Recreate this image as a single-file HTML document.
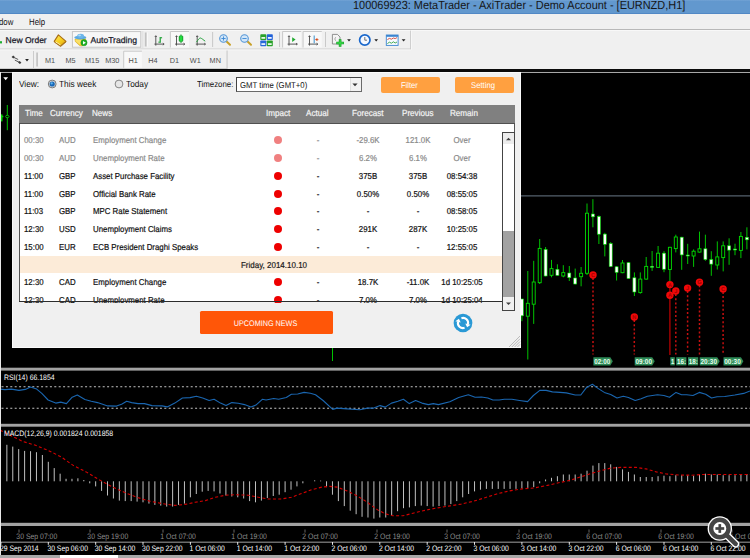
<!DOCTYPE html>
<html><head><meta charset="utf-8"><title>MetaTrader - News Calendar</title>
<style>
html,body{margin:0;padding:0}
body{text-rendering:geometricPrecision;width:750px;height:558px;overflow:hidden;position:relative;background:#000;font-family:"Liberation Sans",sans-serif;color:#000}
.abs{position:absolute}
.t{position:absolute;white-space:pre;line-height:12px;height:12px;transform-origin:0 50%}
.sx{display:inline-block;transform-origin:50% 50%}
#title{left:0;top:0;width:750px;height:14px;background:linear-gradient(#76a5d6 0,#6298ce 1.2px,#6298ce 12.6px,#4f86c4 13.6px,#4f86c4 14px)}
#title .t{left:353.4px;top:-0.6px;font-size:11.8px;transform:scaleX(0.927);color:#161616}
#menu{left:0;top:14px;width:750px;height:16px;background:#f0f0f0}
#tb{left:0;top:30px;width:750px;height:40px;background:#f0f0f0}
#panel{left:12px;top:72px;width:509px;height:276px;background:#f0f0f0;box-sizing:border-box;border:1px solid #fbfbfb}
.btn{position:absolute;border-radius:2px;color:#fff;text-align:center;white-space:pre}
#hdr{left:19px;top:104.8px;width:496px;height:17.9px;background:#808080;border-bottom:1px solid #505050;box-sizing:content-box}
#hdr span{position:absolute;top:2.4px;font-size:8.8px;transform:scaleX(0.92);transform-origin:0 50%;-webkit-text-stroke:0.2px #f4f4f4;line-height:12px;color:#f4f4f4;white-space:pre}
#list{left:20px;top:123.7px;width:493.5px;height:179.5px;background:linear-gradient(#fff 0,#fff 177.8px,#f0f0f0 177.8px);overflow:hidden}
.row{position:absolute;left:0;width:484px;height:12px;font-size:8.6px;line-height:12px;color:#111;-webkit-text-stroke:0.2px currentColor}
.row.past{color:#8a8a8a}
.row span{position:absolute;top:0;white-space:pre;transform:scaleX(0.913);transform-origin:0 50%}
.row span.c{width:60px;text-align:center;transform-origin:50% 50%}
.row i{position:absolute;top:1.9px;width:8.2px;height:8.2px;border-radius:50%;background:#ee0000}
.row.past i{background:#f08080}
</style></head><body>
<div id="title" class="abs"><div class="t">100069923: MetaTrader - AxiTrader - Demo Account - [EURNZD,H1]</div></div>
<div id="menu" class="abs"><div class="t" style="left:-0.6px;top:1.5px;font-size:9.2px;transform:scaleX(0.85);color:#111">dow</div><div class="t" style="left:29px;top:1.5px;font-size:9.2px;transform:scaleX(0.85);color:#111">Help</div></div>
<div id="tb" class="abs">
<svg class="abs" style="left:0;top:-30px" width="750" height="72" viewBox="0 0 750 72">
<defs>
<linearGradient id="gy" x1="0" y1="0" x2="1" y2="1"><stop offset="0" stop-color="#ffe860"/><stop offset="0.5" stop-color="#f8d020"/><stop offset="1" stop-color="#dca010"/></linearGradient>
<linearGradient id="gg" x1="0" y1="0" x2="1" y2="0"><stop offset="0" stop-color="#00a818"/><stop offset="0.5" stop-color="#30f050"/><stop offset="1" stop-color="#00a818"/></linearGradient>
<linearGradient id="gb" x1="0" y1="0" x2="0" y2="1"><stop offset="0" stop-color="#7cc0f0"/><stop offset="1" stop-color="#2a80d0"/></linearGradient>
</defs>
<!-- toolbar frame lines -->
<rect x="0" y="29" width="750" height="1" fill="#b8b8b8"/><rect x="0" y="30" width="750" height="0.8" fill="#fafafa"/>
<rect x="0" y="48.6" width="411" height="0.9" fill="#c6c6c6"/>
<rect x="0" y="49.5" width="411" height="0.8" fill="#fcfcfc"/>
<rect x="410.2" y="30.6" width="0.9" height="18.6" fill="#c8c8c8"/><rect x="411.1" y="30.6" width="0.8" height="19" fill="#fafafa"/>
<rect x="0" y="68" width="227.5" height="0.8" fill="#c6c6c6"/>
<rect x="226.6" y="50.5" width="0.9" height="18" fill="#c0c0c0"/>
<rect x="33" y="51" width="0.9" height="17" fill="#c8c8c8"/>
<rect x="142.4" y="31" width="0.9" height="17" fill="#dcdcdc"/>
<!-- green partial icon -->
<rect x="0" y="41.2" width="2" height="2.2" fill="#20b030"/>
<!-- book icon -->
<polygon points="58.4,34.9 66,41.3 60.6,45.9 54.2,41.4" fill="url(#gy)" stroke="#a86c10" stroke-width="1.1" stroke-linejoin="round"/>
<path d="M55.4,41.9 L60.5,44.9" stroke="#fff2b0" stroke-width="1" fill="none"/>
<path d="M54.3,42 L60.6,46.5 L66,41.9" stroke="#a87014" stroke-width="0.9" fill="none"/>
<!-- AutoTrading button -->
<rect x="72.4" y="31.6" width="68.4" height="15.6" fill="#f7f7f7" stroke="#c2c2c2" stroke-width="0.9"/>
<polygon points="75,39 85.8,38.8 84.4,44.6 82,46 79.6,45.6 75.2,41.4" fill="#f2cc30" stroke="#c89a18" stroke-width="0.5"/>
<polygon points="75.4,39.4 82,39.4 79.8,44.6 75.6,41.2" fill="#fae068"/>
<ellipse cx="80.3" cy="37.5" rx="6" ry="1.9" fill="#5aa8e0"/>
<ellipse cx="80.6" cy="35.9" rx="3.4" ry="2.1" fill="#6cb6ea"/>
<ellipse cx="79.6" cy="35.4" rx="1.4" ry="0.8" fill="#b4dcf6"/>
<circle cx="84" cy="42.7" r="3.1" fill="#1cae24" stroke="#0c8c16" stroke-width="0.4"/>
<polygon points="83,41 83,44.4 85.9,42.7" fill="#fff"/>
<!-- grip 1 -->
<rect x="144.8" y="32.5" width="2" height="14" fill="#c2c2c2"/><rect x="146.8" y="32.5" width="0.8" height="14" fill="#fff"/>
<!-- icon1: bar chart -->
<path d="M155.8,36 V45.6 M154.4,44.1 H164.0" stroke="#484848" stroke-width="0.9" fill="none"/><path d="M154.8,37 L155.8,35.6 L156.8,37 M162.8,43.1 L164.20000000000002,44.1 L162.8,45.1" stroke="#3c3c3c" stroke-width="0.7" fill="none"/>
<rect x="159.6" y="37" width="1.2" height="5.8" fill="#18a030"/><rect x="158.4" y="41.6" width="1.4" height="1.1" fill="#18a030"/><rect x="160.6" y="37.2" width="1.5" height="1.1" fill="#18a030"/>
<!-- pressed box candle -->
<rect x="170.4" y="31.5" width="18.6" height="16" fill="#f8f8f8"/><path d="M170.4,47.5 V31.5 H189" stroke="#c4c4c4" stroke-width="0.9" fill="none"/>
<path d="M176.5,36 V45.6 M175.1,44.1 H184.7" stroke="#484848" stroke-width="0.9" fill="none"/><path d="M175.5,37 L176.5,35.6 L177.5,37 M183.5,43.1 L184.9,44.1 L183.5,45.1" stroke="#3c3c3c" stroke-width="0.7" fill="none"/>
<path d="M181,34.4 V43" stroke="#10a028" stroke-width="0.9"/>
<rect x="179.1" y="35.8" width="3.8" height="5.8" rx="1" fill="url(#gg)" stroke="#0a9020" stroke-width="0.5"/>
<!-- icon3: line chart -->
<path d="M197.2,36 V45.6 M195.79999999999998,44.1 H205.39999999999998" stroke="#484848" stroke-width="0.9" fill="none"/><path d="M196.2,37 L197.2,35.6 L198.2,37 M204.2,43.1 L205.6,44.1 L204.2,45.1" stroke="#3c3c3c" stroke-width="0.7" fill="none"/>
<path d="M196.4,42.2 C198,40 199,38.2 200.4,38 C202,38.4 203.4,40 205.2,41.2" stroke="#20a038" stroke-width="1" fill="none"/>
<rect x="212.2" y="32" width="0.9" height="15" fill="#c4c4c4"/>
<!-- zoom in/out -->
<g>
<line x1="226.6" y1="41.6" x2="230" y2="44.8" stroke="#c8a028" stroke-width="2" stroke-linecap="round"/>
<circle cx="223.5" cy="38.5" r="3.8" fill="#d2e6f8" stroke="#5596d6" stroke-width="1.1"/>
<path d="M221.4,38.5 H225.6 M223.5,36.4 V40.6" stroke="#3b88d4" stroke-width="0.9"/>
<line x1="247.6" y1="41.6" x2="251" y2="44.8" stroke="#c8a028" stroke-width="2" stroke-linecap="round"/>
<circle cx="244.5" cy="38.5" r="3.8" fill="#d2e6f8" stroke="#5596d6" stroke-width="1.1"/>
<path d="M242.4,38.5 H246.6" stroke="#3b88d4" stroke-width="0.9"/>
</g>
<!-- grid icon -->
<rect x="260.3" y="34.3" width="6" height="5.8" rx="0.8" fill="#28a028"/><rect x="266.8" y="34.3" width="6" height="5.8" rx="0.8" fill="#2060d8"/>
<rect x="260.3" y="40.5" width="6" height="5.8" rx="0.8" fill="#2868d8"/><rect x="266.8" y="40.5" width="6" height="5.8" rx="0.8" fill="#28a028"/>
<rect x="261.4" y="37" width="3.8" height="1.8" fill="#e8f8e8"/><rect x="267.9" y="37" width="3.8" height="1.8" fill="#e8f0ff"/>
<rect x="261.4" y="43.2" width="3.8" height="1.8" fill="#e8f0ff"/><rect x="267.9" y="43.2" width="3.8" height="1.8" fill="#e8f8e8"/>
<rect x="279" y="32" width="0.9" height="15" fill="#c4c4c4"/>
<!-- pressed chart shift -->
<rect x="282.6" y="31.5" width="18.6" height="16" fill="#f8f8f8"/><path d="M282.6,47.5 V31.5 H301.2" stroke="#c4c4c4" stroke-width="0.9" fill="none"/>
<path d="M289,36 V45.6 M287.6,44.1 H297.20000000000005" stroke="#484848" stroke-width="0.9" fill="none"/><path d="M288,37 L289,35.6 L290,37 M296.0,43.1 L297.40000000000003,44.1 L296.0,45.1" stroke="#3c3c3c" stroke-width="0.7" fill="none"/>
<polygon points="292.2,37.2 292.2,42 295.6,39.6" fill="#22aa30"/>
<rect x="303.1" y="31.5" width="18.7" height="16" fill="#f8f8f8"/><path d="M303.1,47.5 V31.5 H321.8" stroke="#c4c4c4" stroke-width="0.9" fill="none"/>
<path d="M309.5,36 V45.6 M308.1,44.1 H317.70000000000005" stroke="#484848" stroke-width="0.9" fill="none"/><path d="M308.5,37 L309.5,35.6 L310.5,37 M316.5,43.1 L317.90000000000003,44.1 L316.5,45.1" stroke="#3c3c3c" stroke-width="0.7" fill="none"/>
<path d="M314.2,35.4 V43.2" stroke="#4a98d0" stroke-width="1.1"/>
<polygon points="315,39.6 317.4,38 317.4,41.2" fill="#d84818"/><path d="M317,39.6 H318.4" stroke="#d84818" stroke-width="0.9"/>
<rect x="325" y="32" width="0.9" height="15" fill="#c4c4c4"/>
<!-- doc plus -->
<path d="M332.4,34.4 H337.4 L340,37 V44 H332.4 Z" fill="#f4f4f4" stroke="#787878" stroke-width="0.8"/>
<path d="M335.8,37.2 C334.6,38 334.6,40 335.8,40.8" stroke="#888" stroke-width="0.7" fill="none"/>
<path d="M340.1,39.2 V46.8 M336.3,43 H343.9" stroke="#0e9a1e" stroke-width="2.6"/>
<path d="M340.1,39.8 V46.2 M336.9,43 H343.3" stroke="#38d848" stroke-width="1.3"/>
<polygon points="347.1,39.199999999999996 350.9,39.199999999999996 349,41.6" fill="#222"/>
<!-- clock -->
<circle cx="364.8" cy="40" r="5.2" fill="#f4f8ff" stroke="#1a68cc" stroke-width="1.7"/>
<path d="M364.8,37 V40.2 H367" stroke="#505050" stroke-width="0.8" fill="none"/>
<polygon points="374.3,39.199999999999996 378.09999999999997,39.199999999999996 376.2,41.6" fill="#222"/>
<!-- template -->
<rect x="386.3" y="35" width="11.8" height="10.4" fill="#f6faff" stroke="#3a84d0" stroke-width="0.9"/>
<rect x="386.3" y="35" width="11.8" height="1.8" fill="#3a84d0"/>
<path d="M387.4,39.6 L389.4,38.4 L391.4,39.2 L393.4,38 L395.2,38.6 L397,37.6" stroke="#d04030" stroke-width="0.9" fill="none"/>
<path d="M387.4,43.6 L389.4,42.2 L391.4,43.2 L393.4,41.8 L395.2,43 L397,42" stroke="#30a040" stroke-width="0.9" fill="none"/>
<polygon points="401.70000000000005,39.199999999999996 405.5,39.199999999999996 403.6,41.6" fill="#222"/>
<!-- toolbar2 -->
<path d="M13,57 L18.2,59.5 M14.8,60.1 L20,62.6" stroke="#444" stroke-width="0.9" fill="none"/>
<polygon points="11.6,56.9 13.2,55.5 14.9,57.1 13.3,58.6" fill="#3a3a3a"/><polygon points="21.4,62.7 19.8,64.1 18.1,62.5 19.7,61" fill="#3a3a3a"/>
<polygon points="25.1,59.0 28.9,59.0 27,61.400000000000006" fill="#222"/>
<rect x="36.2" y="52.5" width="2.2" height="14" fill="#c6c6c6"/><rect x="38.4" y="52.5" width="0.8" height="14" fill="#fff"/>
<rect x="123.7" y="51.2" width="18.2" height="16.6" fill="#f8f8f8"/><path d="M123.7,67.8 V51.2 H141.9" stroke="#c4c4c4" stroke-width="0.9" fill="none"/>
</svg>
<div class="t" style="left:5.6px;top:4px;font-size:8.5px;color:#1c1c2c;-webkit-text-stroke:0.25px #1c1c2c;">New Order</div>
<div class="t" style="left:90.5px;top:4px;font-size:8.6px;color:#1c1c2c;-webkit-text-stroke:0.25px #1c1c2c;">AutoTrading</div>
<div class="t" style="left:45px;top:25.3px;font-size:7.3px;color:#505050">M1</div>
<div class="t" style="left:65.4px;top:25.3px;font-size:7.3px;color:#505050">M5</div>
<div class="t" style="left:85px;top:25.3px;font-size:7.3px;color:#505050">M15</div>
<div class="t" style="left:105.2px;top:25.3px;font-size:7.3px;color:#505050">M30</div>
<div class="t" style="left:128.6px;top:25.3px;font-size:7.3px;color:#505050">H1</div>
<div class="t" style="left:148.3px;top:25.3px;font-size:7.3px;color:#505050">H4</div>
<div class="t" style="left:169.8px;top:25.3px;font-size:7.3px;color:#505050">D1</div>
<div class="t" style="left:189.8px;top:25.3px;font-size:7.3px;color:#505050">W1</div>
<div class="t" style="left:209.6px;top:25.3px;font-size:7.3px;color:#505050">MN</div>
</div>
<div class="abs" style="left:0;top:69.2px;width:750px;height:2.8px;background:#0a0a0a"></div>
<div class="abs" style="left:0;top:72px;width:750px;height:1px;background:#a8a8a8"></div>
<svg class="abs" style="left:0;top:0" width="750" height="558" viewBox="0 0 750 558" font-family="Liberation Sans, sans-serif">
<rect x="521" y="195.1" width="229" height="1.5" fill="#46505a"/>
<line x1="521.9" y1="298.8" x2="521.9" y2="321.2" stroke="#00c400" stroke-width="1"/>
<rect x="520.4" y="299.0" width="3" height="16.8" fill="#ffffff" stroke="#00e000" stroke-width="0.6"/>
<line x1="527.8" y1="271.0" x2="527.8" y2="359.5" stroke="#00c400" stroke-width="1"/>
<rect x="526.3" y="303.3" width="3" height="12.9" fill="#000" stroke="#00dc00" stroke-width="0.9"/>
<line x1="533.7" y1="260.8" x2="533.7" y2="323.9" stroke="#00c400" stroke-width="1"/>
<rect x="532.2" y="282.0" width="3" height="22.2" fill="#000" stroke="#00dc00" stroke-width="0.9"/>
<line x1="539.7" y1="239.0" x2="539.7" y2="284.0" stroke="#00c400" stroke-width="1"/>
<rect x="538.2" y="248.4" width="3" height="34.3" fill="#000" stroke="#00dc00" stroke-width="0.9"/>
<line x1="545.6" y1="247.0" x2="545.6" y2="276.5" stroke="#00c400" stroke-width="1"/>
<rect x="544.1" y="249.5" width="3" height="26.5" fill="#ffffff" stroke="#00e000" stroke-width="0.6"/>
<line x1="551.5" y1="259.9" x2="551.5" y2="277.3" stroke="#00c400" stroke-width="1"/>
<rect x="550.0" y="268.6" width="3" height="6.7" fill="#000" stroke="#00dc00" stroke-width="0.9"/>
<line x1="557.4" y1="264.3" x2="557.4" y2="275.8" stroke="#00c400" stroke-width="1"/>
<rect x="555.9" y="269.3" width="3" height="6.0" fill="#ffffff" stroke="#00e000" stroke-width="0.6"/>
<line x1="563.3" y1="265.2" x2="563.3" y2="277.3" stroke="#00c400" stroke-width="1"/>
<rect x="561.8" y="272.6" width="3" height="3.4" fill="#000" stroke="#00dc00" stroke-width="0.9"/>
<line x1="569.3" y1="266.0" x2="569.3" y2="281.0" stroke="#00c400" stroke-width="1"/>
<rect x="567.8" y="273.0" width="3" height="4.7" fill="#ffffff" stroke="#00e000" stroke-width="0.6"/>
<line x1="575.2" y1="268.6" x2="575.2" y2="284.5" stroke="#00c400" stroke-width="1"/>
<rect x="573.7" y="278.0" width="3" height="6.0" fill="#ffffff" stroke="#00e000" stroke-width="0.6"/>
<line x1="581.1" y1="267.0" x2="581.1" y2="286.3" stroke="#00c400" stroke-width="1"/>
<rect x="579.6" y="273.3" width="3" height="3.4" fill="#000" stroke="#00dc00" stroke-width="0.9"/>
<line x1="587.0" y1="203.5" x2="587.0" y2="275.0" stroke="#00c400" stroke-width="1"/>
<rect x="585.5" y="213.2" width="3" height="60.1" fill="#000" stroke="#00dc00" stroke-width="0.9"/>
<line x1="592.9" y1="199.2" x2="592.9" y2="227.3" stroke="#00c400" stroke-width="1"/>
<rect x="591.4" y="214.0" width="3" height="2.8" fill="#ffffff" stroke="#00e000" stroke-width="0.6"/>
<line x1="598.9" y1="215.5" x2="598.9" y2="244.0" stroke="#00c400" stroke-width="1"/>
<rect x="597.4" y="216.5" width="3" height="17.7" fill="#ffffff" stroke="#00e000" stroke-width="0.6"/>
<line x1="604.8" y1="232.8" x2="604.8" y2="256.4" stroke="#00c400" stroke-width="1"/>
<rect x="603.3" y="234.1" width="3" height="10.2" fill="#ffffff" stroke="#00e000" stroke-width="0.6"/>
<line x1="610.7" y1="242.2" x2="610.7" y2="267.0" stroke="#00c400" stroke-width="1"/>
<rect x="609.2" y="243.6" width="3" height="22.9" fill="#ffffff" stroke="#00e000" stroke-width="0.6"/>
<line x1="616.6" y1="266.0" x2="616.6" y2="280.5" stroke="#00c400" stroke-width="1"/>
<rect x="615.1" y="266.8" width="3" height="5.6" fill="#ffffff" stroke="#00e000" stroke-width="0.6"/>
<line x1="622.5" y1="260.0" x2="622.5" y2="273.2" stroke="#00c400" stroke-width="1"/>
<rect x="621.0" y="263.0" width="3" height="9.7" fill="#000" stroke="#00dc00" stroke-width="0.9"/>
<line x1="628.5" y1="262.0" x2="628.5" y2="279.0" stroke="#00c400" stroke-width="1"/>
<rect x="627.0" y="262.7" width="3" height="15.8" fill="#ffffff" stroke="#00e000" stroke-width="0.6"/>
<line x1="634.4" y1="272.4" x2="634.4" y2="296.0" stroke="#00c400" stroke-width="1"/>
<rect x="632.9" y="277.8" width="3" height="14.2" fill="#ffffff" stroke="#00e000" stroke-width="0.6"/>
<line x1="640.3" y1="272.4" x2="640.3" y2="293.7" stroke="#00c400" stroke-width="1"/>
<rect x="638.8" y="279.1" width="3" height="13.5" fill="#000" stroke="#00dc00" stroke-width="0.9"/>
<line x1="646.2" y1="257.0" x2="646.2" y2="279.6" stroke="#00c400" stroke-width="1"/>
<rect x="644.7" y="266.4" width="3" height="12.7" fill="#000" stroke="#00dc00" stroke-width="0.9"/>
<line x1="652.1" y1="251.0" x2="652.1" y2="270.9" stroke="#00c400" stroke-width="1"/>
<rect x="650.6" y="266.3" width="3" height="1.0" fill="#ffffff" stroke="#00e000" stroke-width="0.6"/>
<line x1="658.1" y1="246.0" x2="658.1" y2="267.8" stroke="#00c400" stroke-width="1"/>
<rect x="656.6" y="253.2" width="3" height="14.2" fill="#000" stroke="#00dc00" stroke-width="0.9"/>
<line x1="664.0" y1="251.2" x2="664.0" y2="272.2" stroke="#00c400" stroke-width="1"/>
<rect x="662.5" y="253.2" width="3" height="16.0" fill="#ffffff" stroke="#00e000" stroke-width="0.6"/>
<line x1="669.9" y1="246.8" x2="669.9" y2="281.2" stroke="#00c400" stroke-width="1"/>
<rect x="668.4" y="247.3" width="3" height="22.2" fill="#000" stroke="#00dc00" stroke-width="0.9"/>
<line x1="675.8" y1="234.7" x2="675.8" y2="252.4" stroke="#00c400" stroke-width="1"/>
<rect x="674.3" y="237.0" width="3" height="11.6" fill="#000" stroke="#00dc00" stroke-width="0.9"/>
<line x1="681.7" y1="236.8" x2="681.7" y2="269.8" stroke="#00c400" stroke-width="1"/>
<rect x="680.2" y="237.2" width="3" height="17.7" fill="#ffffff" stroke="#00e000" stroke-width="0.6"/>
<line x1="687.7" y1="243.8" x2="687.7" y2="264.0" stroke="#00c400" stroke-width="1"/>
<rect x="686.2" y="255.0" width="3" height="1.0" fill="#ffffff" stroke="#00e000" stroke-width="0.6"/>
<line x1="693.6" y1="249.4" x2="693.6" y2="266.9" stroke="#00c400" stroke-width="1"/>
<rect x="692.1" y="251.2" width="3" height="4.8" fill="#000" stroke="#00dc00" stroke-width="0.9"/>
<line x1="699.5" y1="231.6" x2="699.5" y2="252.5" stroke="#00c400" stroke-width="1"/>
<rect x="698.0" y="248.8" width="3" height="3.3" fill="#000" stroke="#00dc00" stroke-width="0.9"/>
<line x1="705.4" y1="234.7" x2="705.4" y2="260.8" stroke="#00c400" stroke-width="1"/>
<rect x="703.9" y="248.8" width="3" height="10.7" fill="#ffffff" stroke="#00e000" stroke-width="0.6"/>
<line x1="711.3" y1="251.2" x2="711.3" y2="275.8" stroke="#00c400" stroke-width="1"/>
<rect x="709.8" y="259.6" width="3" height="4.5" fill="#ffffff" stroke="#00e000" stroke-width="0.6"/>
<line x1="717.3" y1="241.4" x2="717.3" y2="269.5" stroke="#00c400" stroke-width="1"/>
<rect x="715.8" y="256.9" width="3" height="8.1" fill="#000" stroke="#00dc00" stroke-width="0.9"/>
<line x1="723.2" y1="241.4" x2="723.2" y2="271.4" stroke="#00c400" stroke-width="1"/>
<rect x="721.7" y="245.8" width="3" height="11.8" fill="#000" stroke="#00dc00" stroke-width="0.9"/>
<line x1="729.1" y1="238.3" x2="729.1" y2="264.8" stroke="#00c400" stroke-width="1"/>
<rect x="727.6" y="245.8" width="3" height="4.3" fill="#ffffff" stroke="#00e000" stroke-width="0.6"/>
<line x1="735.0" y1="243.7" x2="735.0" y2="255.2" stroke="#00c400" stroke-width="1"/>
<rect x="733.5" y="249.0" width="3" height="1.0" fill="#ffffff" stroke="#00e000" stroke-width="0.6"/>
<line x1="740.9" y1="232.0" x2="740.9" y2="258.1" stroke="#00c400" stroke-width="1"/>
<rect x="739.4" y="236.4" width="3" height="14.0" fill="#000" stroke="#00dc00" stroke-width="0.9"/>
<line x1="746.9" y1="227.3" x2="746.9" y2="249.4" stroke="#00c400" stroke-width="1"/>
<rect x="745.4" y="237.3" width="3" height="2.5" fill="#ffffff" stroke="#00e000" stroke-width="0.6"/>
<line x1="593" y1="278" x2="593" y2="354.6" stroke="#c81010" stroke-width="1.5" stroke-dasharray="2 2.2"/>
<line x1="634.3" y1="320" x2="634.3" y2="354.6" stroke="#c81010" stroke-width="1.5" stroke-dasharray="2 2.2"/>
<line x1="669.9" y1="284.6" x2="669.9" y2="355" stroke="#b40000" stroke-width="1.3"/>
<line x1="675.8" y1="294" x2="675.8" y2="354.6" stroke="#c81010" stroke-width="1.5" stroke-dasharray="2 2.2"/>
<line x1="687.6" y1="291.1" x2="687.6" y2="354.6" stroke="#c81010" stroke-width="1.5" stroke-dasharray="2 2.2"/>
<line x1="699.5" y1="285.3" x2="699.5" y2="354.6" stroke="#c81010" stroke-width="1.5" stroke-dasharray="2 2.2"/>
<line x1="723.1" y1="291.9" x2="723.1" y2="354.6" stroke="#c81010" stroke-width="1.5" stroke-dasharray="2 2.2"/>
<circle cx="593" cy="275" r="3.7" fill="#f00808"/>
<text x="593" y="276.9" font-size="5.6" fill="#a40000" text-anchor="middle" font-weight="bold">C</text>
<circle cx="634.3" cy="317" r="3.7" fill="#f00808"/>
<text x="634.3" y="318.9" font-size="5.6" fill="#a40000" text-anchor="middle" font-weight="bold">N</text>
<circle cx="669.9" cy="284.6" r="3.7" fill="#f00808"/>
<text x="669.9" y="286.5" font-size="5.6" fill="#a40000" text-anchor="middle" font-weight="bold">A</text>
<circle cx="669.9" cy="295.3" r="3.7" fill="#f00808"/>
<text x="669.9" y="297.2" font-size="5.6" fill="#a40000" text-anchor="middle" font-weight="bold">A</text>
<circle cx="675.8" cy="291" r="3.7" fill="#f00808"/>
<text x="675.8" y="292.9" font-size="5.6" fill="#a40000" text-anchor="middle" font-weight="bold">J</text>
<circle cx="687.6" cy="288.1" r="3.7" fill="#f00808"/>
<text x="687.6" y="290.0" font-size="5.6" fill="#a40000" text-anchor="middle" font-weight="bold">J</text>
<circle cx="699.5" cy="282.3" r="3.7" fill="#f00808"/>
<text x="699.5" y="284.2" font-size="5.6" fill="#a40000" text-anchor="middle" font-weight="bold">G</text>
<circle cx="723.1" cy="288.9" r="3.7" fill="#f00808"/>
<text x="723.1" y="290.79999999999995" font-size="5.6" fill="#a40000" text-anchor="middle" font-weight="bold">C</text>
<polygon points="593.4,357.2 610.3,357.2 612.8,361.29999999999995 610.3,365.4 593.4,365.4" fill="#2e8b57"/>
<text x="594.1999999999999" y="363.79999999999995" font-size="7.2" fill="#e8fff0" font-weight="bold" textLength="15.9" lengthAdjust="spacingAndGlyphs">02:00</text>
<polygon points="634.7,357.2 652.2,357.2 654.7,361.29999999999995 652.2,365.4 634.7,365.4" fill="#2e8b57"/>
<text x="635.5" y="363.79999999999995" font-size="7.2" fill="#e8fff0" font-weight="bold" textLength="16.5" lengthAdjust="spacingAndGlyphs">09:00</text>
<polygon points="670.3,357.2 674.8,357.2 674.8,365.4 670.3,365.4" fill="#2e8b57"/>
<text x="671.0999999999999" y="363.79999999999995" font-size="7.2" fill="#e8fff0" font-weight="bold" textLength="3.3" lengthAdjust="spacingAndGlyphs">1</text>
<polygon points="676.2,357.2 686.4,357.2 686.4,365.4 676.2,365.4" fill="#2e8b57"/>
<text x="677.0" y="363.79999999999995" font-size="7.2" fill="#e8fff0" font-weight="bold" textLength="9.0" lengthAdjust="spacingAndGlyphs">16:</text>
<polygon points="688,357.2 698.2,357.2 698.2,365.4 688,365.4" fill="#2e8b57"/>
<text x="688.8" y="363.79999999999995" font-size="7.2" fill="#e8fff0" font-weight="bold" textLength="9.0" lengthAdjust="spacingAndGlyphs">18:</text>
<polygon points="699.7,357.2 717.2,357.2 719.7,361.29999999999995 717.2,365.4 699.7,365.4" fill="#2e8b57"/>
<text x="700.5" y="363.79999999999995" font-size="7.2" fill="#e8fff0" font-weight="bold" textLength="16.5" lengthAdjust="spacingAndGlyphs">20:30</text>
<polygon points="723.5,357.2 740.9,357.2 743.4,361.29999999999995 740.9,365.4 723.5,365.4" fill="#2e8b57"/>
<text x="724.3" y="363.79999999999995" font-size="7.2" fill="#e8fff0" font-weight="bold" textLength="16.4" lengthAdjust="spacingAndGlyphs">00:30</text>
<rect x="0" y="367.7" width="750" height="2.9" fill="#a2a2a2"/>
<rect x="0" y="423.8" width="750" height="2.9" fill="#a2a2a2"/>
<rect x="0" y="522.8" width="750" height="3.2" fill="#a2a2a2"/>
<line x1="1.5" y1="386.8" x2="750" y2="386.8" stroke="#c4c4c4" stroke-width="1.1" stroke-dasharray="2 2.4"/>
<line x1="1.5" y1="408.3" x2="750" y2="408.3" stroke="#c4c4c4" stroke-width="1.1" stroke-dasharray="2 2.4"/>
<polyline points="0,389.1 5,389.6 11.4,389.1 19,390.4 25.3,389.4 30.4,386.9 36.7,389.1 41.8,393.4 48.1,400 55.7,403.1 60.8,402.1 66.4,403.6 72.2,397.2 77.3,395 84.9,399.5 91.2,401.3 97.5,402.6 107.7,405.9 116.5,406.1 121.6,404.3 126.7,401.3 131.7,402.6 138,403.6 144.4,403.6 152,405.6 162,405.9 167.2,406.9 174.8,403.1 182.4,398 190.1,397.6 196.4,396.2 202.7,398 209.1,400.5 214.1,399.3 220.5,403.1 226,405.6 231.9,402.6 238.2,403.3 244.5,404.6 250.9,407.1 255.9,405.1 262.3,399.3 266.1,400 273.7,398.5 278.7,399.3 286.3,397.5 291.4,394.2 297.7,394 304.1,392.4 310.4,393.2 315.5,394.7 323.1,400.5 332.7,409.4 337,408.1 347.1,408.9 359.8,409.7 367.4,408.1 373.8,408.1 380.1,405.6 385.2,407.1 391.5,403.1 397.9,401.3 403.4,399.3 409.3,403.6 415.6,400.5 421.9,403.1 428.3,404.6 433.3,403.6 438.4,404.6 449.8,401.8 458.7,397.5 468.3,394.7 475.1,397.2 481.5,397 487.8,398 492.9,400 499.2,400 504.3,399.3 511.9,399.3 519.5,400.5 527.6,401.6 533.4,395.5 539.8,390.4 546.1,390.4 552.4,391.9 560,392.4 566.3,392.9 575.2,395 580.8,395 586.6,387.4 592.4,384.3 598,388.4 604.3,392.4 610.7,394.5 617,398 623.3,396.2 628.4,397.5 635.2,400.5 641.1,398.8 647.4,396.2 657.5,394.7 663.9,395.5 669.5,397.2 676,392.4 681.6,394.7 686.7,394.7 693,395.5 699.3,392.4 705.7,394.2 711.5,398 717.1,396.7 724.7,396.5 734.8,395 743.7,393.4 750,390.9" fill="none" stroke="#1a66b0" stroke-width="1.1" stroke-linejoin="round"/>
<text transform="translate(4,380) scale(0.873,1)" font-size="7.9" fill="#fff">RSI(14) 66.1854</text>
<line x1="6.86" y1="444.8" x2="6.86" y2="481.3" stroke="#c0c0c0" stroke-width="1"/>
<line x1="12.78" y1="446.6" x2="12.78" y2="481.3" stroke="#c0c0c0" stroke-width="1"/>
<line x1="18.70" y1="449.1" x2="18.70" y2="481.3" stroke="#c0c0c0" stroke-width="1"/>
<line x1="24.62" y1="450.9" x2="24.62" y2="481.3" stroke="#c0c0c0" stroke-width="1"/>
<line x1="30.54" y1="451.2" x2="30.54" y2="481.3" stroke="#c0c0c0" stroke-width="1"/>
<line x1="36.46" y1="452.2" x2="36.46" y2="481.3" stroke="#c0c0c0" stroke-width="1"/>
<line x1="42.38" y1="455.0" x2="42.38" y2="481.3" stroke="#c0c0c0" stroke-width="1"/>
<line x1="48.30" y1="461.8" x2="48.30" y2="481.3" stroke="#c0c0c0" stroke-width="1"/>
<line x1="54.22" y1="468.1" x2="54.22" y2="481.3" stroke="#c0c0c0" stroke-width="1"/>
<line x1="60.14" y1="473.7" x2="60.14" y2="481.3" stroke="#c0c0c0" stroke-width="1"/>
<line x1="66.06" y1="478.8" x2="66.06" y2="481.3" stroke="#c0c0c0" stroke-width="1"/>
<line x1="71.98" y1="478.8" x2="71.98" y2="481.3" stroke="#c0c0c0" stroke-width="1"/>
<line x1="77.90" y1="478.3" x2="77.90" y2="481.3" stroke="#c0c0c0" stroke-width="1"/>
<line x1="83.82" y1="480.0" x2="83.82" y2="481.3" stroke="#c0c0c0" stroke-width="1"/>
<line x1="89.74" y1="481.3" x2="89.74" y2="483.3" stroke="#c0c0c0" stroke-width="1"/>
<line x1="95.66" y1="481.3" x2="95.66" y2="486.4" stroke="#c0c0c0" stroke-width="1"/>
<line x1="101.58" y1="481.3" x2="101.58" y2="490.9" stroke="#c0c0c0" stroke-width="1"/>
<line x1="107.50" y1="481.3" x2="107.50" y2="495.5" stroke="#c0c0c0" stroke-width="1"/>
<line x1="113.42" y1="481.3" x2="113.42" y2="498.5" stroke="#c0c0c0" stroke-width="1"/>
<line x1="119.34" y1="481.3" x2="119.34" y2="500.6" stroke="#c0c0c0" stroke-width="1"/>
<line x1="125.26" y1="481.3" x2="125.26" y2="501.1" stroke="#c0c0c0" stroke-width="1"/>
<line x1="131.18" y1="481.3" x2="131.18" y2="501.1" stroke="#c0c0c0" stroke-width="1"/>
<line x1="137.10" y1="481.3" x2="137.10" y2="501.6" stroke="#c0c0c0" stroke-width="1"/>
<line x1="143.02" y1="481.3" x2="143.02" y2="502.3" stroke="#c0c0c0" stroke-width="1"/>
<line x1="148.94" y1="481.3" x2="148.94" y2="503.6" stroke="#c0c0c0" stroke-width="1"/>
<line x1="154.86" y1="481.3" x2="154.86" y2="504.9" stroke="#c0c0c0" stroke-width="1"/>
<line x1="160.78" y1="481.3" x2="160.78" y2="505.6" stroke="#c0c0c0" stroke-width="1"/>
<line x1="166.70" y1="481.3" x2="166.70" y2="506.6" stroke="#c0c0c0" stroke-width="1"/>
<line x1="172.62" y1="481.3" x2="172.62" y2="506.6" stroke="#c0c0c0" stroke-width="1"/>
<line x1="178.54" y1="481.3" x2="178.54" y2="504.9" stroke="#c0c0c0" stroke-width="1"/>
<line x1="184.46" y1="481.3" x2="184.46" y2="503.6" stroke="#c0c0c0" stroke-width="1"/>
<line x1="190.38" y1="481.3" x2="190.38" y2="497.3" stroke="#c0c0c0" stroke-width="1"/>
<line x1="196.30" y1="481.3" x2="196.30" y2="494.0" stroke="#c0c0c0" stroke-width="1"/>
<line x1="202.22" y1="481.3" x2="202.22" y2="491.7" stroke="#c0c0c0" stroke-width="1"/>
<line x1="208.14" y1="481.3" x2="208.14" y2="490.9" stroke="#c0c0c0" stroke-width="1"/>
<line x1="214.06" y1="481.3" x2="214.06" y2="491.4" stroke="#c0c0c0" stroke-width="1"/>
<line x1="219.98" y1="481.3" x2="219.98" y2="493.5" stroke="#c0c0c0" stroke-width="1"/>
<line x1="225.90" y1="481.3" x2="225.90" y2="495.5" stroke="#c0c0c0" stroke-width="1"/>
<line x1="231.82" y1="481.3" x2="231.82" y2="496.5" stroke="#c0c0c0" stroke-width="1"/>
<line x1="237.74" y1="481.3" x2="237.74" y2="497.3" stroke="#c0c0c0" stroke-width="1"/>
<line x1="243.66" y1="481.3" x2="243.66" y2="498.5" stroke="#c0c0c0" stroke-width="1"/>
<line x1="249.58" y1="481.3" x2="249.58" y2="501.1" stroke="#c0c0c0" stroke-width="1"/>
<line x1="255.50" y1="481.3" x2="255.50" y2="502.3" stroke="#c0c0c0" stroke-width="1"/>
<line x1="261.42" y1="481.3" x2="261.42" y2="500.6" stroke="#c0c0c0" stroke-width="1"/>
<line x1="267.34" y1="481.3" x2="267.34" y2="498.0" stroke="#c0c0c0" stroke-width="1"/>
<line x1="273.26" y1="481.3" x2="273.26" y2="496.0" stroke="#c0c0c0" stroke-width="1"/>
<line x1="279.18" y1="481.3" x2="279.18" y2="494.7" stroke="#c0c0c0" stroke-width="1"/>
<line x1="285.10" y1="481.3" x2="285.10" y2="492.2" stroke="#c0c0c0" stroke-width="1"/>
<line x1="291.02" y1="481.3" x2="291.02" y2="489.7" stroke="#c0c0c0" stroke-width="1"/>
<line x1="296.94" y1="481.3" x2="296.94" y2="486.4" stroke="#c0c0c0" stroke-width="1"/>
<line x1="302.86" y1="481.3" x2="302.86" y2="483.3" stroke="#c0c0c0" stroke-width="1"/>
<line x1="314.70" y1="480.3" x2="314.70" y2="481.3" stroke="#c0c0c0" stroke-width="1"/>
<line x1="320.62" y1="480.6" x2="320.62" y2="481.3" stroke="#c0c0c0" stroke-width="1"/>
<line x1="326.54" y1="481.3" x2="326.54" y2="487.1" stroke="#c0c0c0" stroke-width="1"/>
<line x1="332.46" y1="481.3" x2="332.46" y2="494.7" stroke="#c0c0c0" stroke-width="1"/>
<line x1="338.38" y1="481.3" x2="338.38" y2="501.1" stroke="#c0c0c0" stroke-width="1"/>
<line x1="344.30" y1="481.3" x2="344.30" y2="506.1" stroke="#c0c0c0" stroke-width="1"/>
<line x1="350.22" y1="481.3" x2="350.22" y2="510.7" stroke="#c0c0c0" stroke-width="1"/>
<line x1="356.14" y1="481.3" x2="356.14" y2="514.2" stroke="#c0c0c0" stroke-width="1"/>
<line x1="362.06" y1="481.3" x2="362.06" y2="516.8" stroke="#c0c0c0" stroke-width="1"/>
<line x1="367.98" y1="481.3" x2="367.98" y2="517.5" stroke="#c0c0c0" stroke-width="1"/>
<line x1="373.90" y1="481.3" x2="373.90" y2="518.6" stroke="#c0c0c0" stroke-width="1"/>
<line x1="379.82" y1="481.3" x2="379.82" y2="517.5" stroke="#c0c0c0" stroke-width="1"/>
<line x1="385.74" y1="481.3" x2="385.74" y2="517.5" stroke="#c0c0c0" stroke-width="1"/>
<line x1="391.66" y1="481.3" x2="391.66" y2="515.0" stroke="#c0c0c0" stroke-width="1"/>
<line x1="397.58" y1="481.3" x2="397.58" y2="511.2" stroke="#c0c0c0" stroke-width="1"/>
<line x1="403.50" y1="481.3" x2="403.50" y2="508.2" stroke="#c0c0c0" stroke-width="1"/>
<line x1="409.42" y1="481.3" x2="409.42" y2="507.4" stroke="#c0c0c0" stroke-width="1"/>
<line x1="415.34" y1="481.3" x2="415.34" y2="506.1" stroke="#c0c0c0" stroke-width="1"/>
<line x1="421.26" y1="481.3" x2="421.26" y2="505.6" stroke="#c0c0c0" stroke-width="1"/>
<line x1="427.18" y1="481.3" x2="427.18" y2="506.1" stroke="#c0c0c0" stroke-width="1"/>
<line x1="433.10" y1="481.3" x2="433.10" y2="506.6" stroke="#c0c0c0" stroke-width="1"/>
<line x1="439.02" y1="481.3" x2="439.02" y2="506.1" stroke="#c0c0c0" stroke-width="1"/>
<line x1="444.94" y1="481.3" x2="444.94" y2="505.6" stroke="#c0c0c0" stroke-width="1"/>
<line x1="450.86" y1="481.3" x2="450.86" y2="504.1" stroke="#c0c0c0" stroke-width="1"/>
<line x1="456.78" y1="481.3" x2="456.78" y2="501.1" stroke="#c0c0c0" stroke-width="1"/>
<line x1="462.70" y1="481.3" x2="462.70" y2="497.3" stroke="#c0c0c0" stroke-width="1"/>
<line x1="468.62" y1="481.3" x2="468.62" y2="494.0" stroke="#c0c0c0" stroke-width="1"/>
<line x1="474.54" y1="481.3" x2="474.54" y2="491.4" stroke="#c0c0c0" stroke-width="1"/>
<line x1="480.46" y1="481.3" x2="480.46" y2="489.7" stroke="#c0c0c0" stroke-width="1"/>
<line x1="486.38" y1="481.3" x2="486.38" y2="488.9" stroke="#c0c0c0" stroke-width="1"/>
<line x1="492.30" y1="481.3" x2="492.30" y2="488.9" stroke="#c0c0c0" stroke-width="1"/>
<line x1="498.22" y1="481.3" x2="498.22" y2="488.9" stroke="#c0c0c0" stroke-width="1"/>
<line x1="504.14" y1="481.3" x2="504.14" y2="488.9" stroke="#c0c0c0" stroke-width="1"/>
<line x1="510.06" y1="481.3" x2="510.06" y2="488.9" stroke="#c0c0c0" stroke-width="1"/>
<line x1="515.98" y1="481.3" x2="515.98" y2="488.9" stroke="#c0c0c0" stroke-width="1"/>
<line x1="521.90" y1="481.3" x2="521.90" y2="488.4" stroke="#c0c0c0" stroke-width="1"/>
<line x1="527.82" y1="481.3" x2="527.82" y2="487.9" stroke="#c0c0c0" stroke-width="1"/>
<line x1="533.74" y1="481.3" x2="533.74" y2="487.1" stroke="#c0c0c0" stroke-width="1"/>
<line x1="539.66" y1="481.3" x2="539.66" y2="483.3" stroke="#c0c0c0" stroke-width="1"/>
<line x1="545.58" y1="479.5" x2="545.58" y2="481.3" stroke="#c0c0c0" stroke-width="1"/>
<line x1="551.50" y1="477.8" x2="551.50" y2="481.3" stroke="#c0c0c0" stroke-width="1"/>
<line x1="557.42" y1="476.2" x2="557.42" y2="481.3" stroke="#c0c0c0" stroke-width="1"/>
<line x1="563.34" y1="474.5" x2="563.34" y2="481.3" stroke="#c0c0c0" stroke-width="1"/>
<line x1="569.26" y1="474.5" x2="569.26" y2="481.3" stroke="#c0c0c0" stroke-width="1"/>
<line x1="575.18" y1="474.5" x2="575.18" y2="481.3" stroke="#c0c0c0" stroke-width="1"/>
<line x1="581.10" y1="473.7" x2="581.10" y2="481.3" stroke="#c0c0c0" stroke-width="1"/>
<line x1="587.02" y1="470.7" x2="587.02" y2="481.3" stroke="#c0c0c0" stroke-width="1"/>
<line x1="592.94" y1="465.6" x2="592.94" y2="481.3" stroke="#c0c0c0" stroke-width="1"/>
<line x1="598.86" y1="463.1" x2="598.86" y2="481.3" stroke="#c0c0c0" stroke-width="1"/>
<line x1="604.78" y1="463.1" x2="604.78" y2="481.3" stroke="#c0c0c0" stroke-width="1"/>
<line x1="610.70" y1="464.3" x2="610.70" y2="481.3" stroke="#c0c0c0" stroke-width="1"/>
<line x1="616.62" y1="466.9" x2="616.62" y2="481.3" stroke="#c0c0c0" stroke-width="1"/>
<line x1="622.54" y1="469.4" x2="622.54" y2="481.3" stroke="#c0c0c0" stroke-width="1"/>
<line x1="628.46" y1="471.9" x2="628.46" y2="481.3" stroke="#c0c0c0" stroke-width="1"/>
<line x1="634.38" y1="474.5" x2="634.38" y2="481.3" stroke="#c0c0c0" stroke-width="1"/>
<line x1="640.30" y1="477.0" x2="640.30" y2="481.3" stroke="#c0c0c0" stroke-width="1"/>
<line x1="646.22" y1="477.0" x2="646.22" y2="481.3" stroke="#c0c0c0" stroke-width="1"/>
<line x1="652.14" y1="477.0" x2="652.14" y2="481.3" stroke="#c0c0c0" stroke-width="1"/>
<line x1="658.06" y1="476.2" x2="658.06" y2="481.3" stroke="#c0c0c0" stroke-width="1"/>
<line x1="663.98" y1="475.7" x2="663.98" y2="481.3" stroke="#c0c0c0" stroke-width="1"/>
<line x1="669.90" y1="476.2" x2="669.90" y2="481.3" stroke="#c0c0c0" stroke-width="1"/>
<line x1="675.82" y1="475.2" x2="675.82" y2="481.3" stroke="#c0c0c0" stroke-width="1"/>
<line x1="681.74" y1="475.2" x2="681.74" y2="481.3" stroke="#c0c0c0" stroke-width="1"/>
<line x1="687.66" y1="475.2" x2="687.66" y2="481.3" stroke="#c0c0c0" stroke-width="1"/>
<line x1="693.58" y1="475.7" x2="693.58" y2="481.3" stroke="#c0c0c0" stroke-width="1"/>
<line x1="699.50" y1="474.5" x2="699.50" y2="481.3" stroke="#c0c0c0" stroke-width="1"/>
<line x1="705.42" y1="473.7" x2="705.42" y2="481.3" stroke="#c0c0c0" stroke-width="1"/>
<line x1="711.34" y1="474.5" x2="711.34" y2="481.3" stroke="#c0c0c0" stroke-width="1"/>
<line x1="717.26" y1="474.5" x2="717.26" y2="481.3" stroke="#c0c0c0" stroke-width="1"/>
<line x1="723.18" y1="475.2" x2="723.18" y2="481.3" stroke="#c0c0c0" stroke-width="1"/>
<line x1="729.10" y1="475.2" x2="729.10" y2="481.3" stroke="#c0c0c0" stroke-width="1"/>
<line x1="735.02" y1="475.2" x2="735.02" y2="481.3" stroke="#c0c0c0" stroke-width="1"/>
<line x1="740.94" y1="474.5" x2="740.94" y2="481.3" stroke="#c0c0c0" stroke-width="1"/>
<line x1="746.86" y1="474.0" x2="746.86" y2="481.3" stroke="#c0c0c0" stroke-width="1"/>
<polyline points="0,430.1 10.1,435.2 22.8,441.5 35.5,445.3 48.1,450.4 60.8,456.7 73.5,465.6 86.1,471.9 98.8,479.5 111.5,486.4 124.1,492.2 136.8,497.3 149.5,501.1 162.1,503.6 174.8,505.4 185,504.4 195.1,502.3 205.3,500.6 215.4,497.3 225.5,495.2 235.7,494.7 248.3,495.2 258.5,497.3 268.6,499 281.3,499 291.4,497.3 301.5,493.5 311.7,489.7 321.8,487.1 329.4,486.4 337,487.1 347.1,490.9 357.3,496 367.4,502.3 377.6,509.9 385.2,513.7 392.8,515.8 402.9,515.8 413.1,513.2 423.2,510.7 435.9,508.2 448.5,506.1 461.2,504.1 473.9,501.1 484,498 496.7,494 509.3,490.9 522,488.9 534.7,487.9 547.3,485.4 560,482.5 570.1,480.3 580.3,477 590.4,473.7 600.5,470.7 610.7,468.1 620.8,467.4 636,467.4 646.1,468.9 656.3,471.9 666.4,474 679.1,475 691.7,475.2 701.9,474.5 724.7,474.5 750,474.5" fill="none" stroke="#d40000" stroke-width="1.1" stroke-dasharray="3 2.3"/>
<text transform="translate(4,435.6) scale(0.873,1)" font-size="7.9" fill="#fff">MACD(12,26,9) 0.001824 0.001858</text>
<rect x="1" y="541.7" width="749" height="0.9" fill="#b4b4b4"/>
<line x1="19" y1="529.5" x2="19" y2="532.6" stroke="#666" stroke-width="1"/>
<text transform="translate(16.3,539.4) scale(0.873,1)" font-size="7.9" fill="#8c8c8c">30 Sep 07:00</text>
<line x1="90" y1="529.5" x2="90" y2="532.6" stroke="#666" stroke-width="1"/>
<text transform="translate(87.3,539.4) scale(0.873,1)" font-size="7.9" fill="#8c8c8c">30 Sep 19:00</text>
<line x1="163" y1="529.5" x2="163" y2="532.6" stroke="#666" stroke-width="1"/>
<text transform="translate(160.3,539.4) scale(0.873,1)" font-size="7.9" fill="#8c8c8c">1 Oct 07:00</text>
<line x1="234" y1="529.5" x2="234" y2="532.6" stroke="#666" stroke-width="1"/>
<text transform="translate(231.3,539.4) scale(0.873,1)" font-size="7.9" fill="#8c8c8c">1 Oct 19:00</text>
<line x1="305" y1="529.5" x2="305" y2="532.6" stroke="#666" stroke-width="1"/>
<text transform="translate(302.3,539.4) scale(0.873,1)" font-size="7.9" fill="#8c8c8c">2 Oct 07:00</text>
<line x1="377" y1="529.5" x2="377" y2="532.6" stroke="#666" stroke-width="1"/>
<text transform="translate(374.3,539.4) scale(0.873,1)" font-size="7.9" fill="#8c8c8c">2 Oct 19:00</text>
<line x1="447" y1="529.5" x2="447" y2="532.6" stroke="#666" stroke-width="1"/>
<text transform="translate(444.3,539.4) scale(0.873,1)" font-size="7.9" fill="#8c8c8c">3 Oct 07:00</text>
<line x1="519" y1="529.5" x2="519" y2="532.6" stroke="#666" stroke-width="1"/>
<text transform="translate(516.3,539.4) scale(0.873,1)" font-size="7.9" fill="#8c8c8c">3 Oct 19:00</text>
<line x1="589" y1="529.5" x2="589" y2="532.6" stroke="#666" stroke-width="1"/>
<text transform="translate(586.3,539.4) scale(0.873,1)" font-size="7.9" fill="#8c8c8c">6 Oct 07:00</text>
<line x1="661" y1="529.5" x2="661" y2="532.6" stroke="#666" stroke-width="1"/>
<text transform="translate(658.3,539.4) scale(0.873,1)" font-size="7.9" fill="#8c8c8c">6 Oct 19:00</text>
<line x1="732" y1="529.5" x2="732" y2="532.6" stroke="#666" stroke-width="1"/>
<text transform="translate(729.3,539.4) scale(0.873,1)" font-size="7.9" fill="#8c8c8c">6 Oct 07:00</text>
<line x1="0.9" y1="542" x2="0.9" y2="544.8" stroke="#e8e8e8" stroke-width="1"/>
<text transform="translate(0.0,551.4) scale(0.863,1)" font-size="7.9" fill="#fff">29 Sep 2014</text>
<line x1="48.3" y1="542" x2="48.3" y2="544.8" stroke="#e8e8e8" stroke-width="1"/>
<text transform="translate(47.4,551.4) scale(0.863,1)" font-size="7.9" fill="#fff">30 Sep 06:00</text>
<line x1="95.7" y1="542" x2="95.7" y2="544.8" stroke="#e8e8e8" stroke-width="1"/>
<text transform="translate(94.8,551.4) scale(0.863,1)" font-size="7.9" fill="#fff">30 Sep 14:00</text>
<line x1="143.0" y1="542" x2="143.0" y2="544.8" stroke="#e8e8e8" stroke-width="1"/>
<text transform="translate(142.1,551.4) scale(0.863,1)" font-size="7.9" fill="#fff">30 Sep 22:00</text>
<line x1="190.4" y1="542" x2="190.4" y2="544.8" stroke="#e8e8e8" stroke-width="1"/>
<text transform="translate(189.5,551.4) scale(0.863,1)" font-size="7.9" fill="#fff">1 Oct 06:00</text>
<line x1="237.7" y1="542" x2="237.7" y2="544.8" stroke="#e8e8e8" stroke-width="1"/>
<text transform="translate(236.8,551.4) scale(0.863,1)" font-size="7.9" fill="#fff">1 Oct 14:00</text>
<line x1="285.1" y1="542" x2="285.1" y2="544.8" stroke="#e8e8e8" stroke-width="1"/>
<text transform="translate(284.2,551.4) scale(0.863,1)" font-size="7.9" fill="#fff">1 Oct 22:00</text>
<line x1="332.5" y1="542" x2="332.5" y2="544.8" stroke="#e8e8e8" stroke-width="1"/>
<text transform="translate(331.6,551.4) scale(0.863,1)" font-size="7.9" fill="#fff">2 Oct 06:00</text>
<line x1="379.8" y1="542" x2="379.8" y2="544.8" stroke="#e8e8e8" stroke-width="1"/>
<text transform="translate(378.9,551.4) scale(0.863,1)" font-size="7.9" fill="#fff">2 Oct 14:00</text>
<line x1="427.2" y1="542" x2="427.2" y2="544.8" stroke="#e8e8e8" stroke-width="1"/>
<text transform="translate(426.3,551.4) scale(0.863,1)" font-size="7.9" fill="#fff">2 Oct 22:00</text>
<line x1="474.5" y1="542" x2="474.5" y2="544.8" stroke="#e8e8e8" stroke-width="1"/>
<text transform="translate(473.6,551.4) scale(0.863,1)" font-size="7.9" fill="#fff">3 Oct 06:00</text>
<line x1="521.9" y1="542" x2="521.9" y2="544.8" stroke="#e8e8e8" stroke-width="1"/>
<text transform="translate(521.0,551.4) scale(0.863,1)" font-size="7.9" fill="#fff">3 Oct 14:00</text>
<line x1="569.3" y1="542" x2="569.3" y2="544.8" stroke="#e8e8e8" stroke-width="1"/>
<text transform="translate(568.4,551.4) scale(0.863,1)" font-size="7.9" fill="#fff">3 Oct 22:00</text>
<line x1="616.6" y1="542" x2="616.6" y2="544.8" stroke="#e8e8e8" stroke-width="1"/>
<text transform="translate(615.7,551.4) scale(0.863,1)" font-size="7.9" fill="#fff">6 Oct 06:00</text>
<line x1="664.0" y1="542" x2="664.0" y2="544.8" stroke="#e8e8e8" stroke-width="1"/>
<text transform="translate(663.1,551.4) scale(0.863,1)" font-size="7.9" fill="#fff">6 Oct 14:00</text>
<line x1="711.3" y1="542" x2="711.3" y2="544.8" stroke="#e8e8e8" stroke-width="1"/>
<text transform="translate(710.4,551.4) scale(0.863,1)" font-size="7.9" fill="#fff">6 Oct 22:00</text>
<!-- left partial candle in gap -->
<line x1="7.3" y1="105" x2="7.3" y2="130.2" stroke="#00c400" stroke-width="1"/>
<rect x="1" y="114.4" width="1.5" height="7" fill="#00d400"/><rect x="1" y="115.8" width="2.4" height="1.5" fill="#00d400"/>
<ellipse cx="7.3" cy="116.5" rx="1.7" ry="1.2" fill="#000" stroke="#00dc00" stroke-width="0.8"/>
<line x1="332.5" y1="348" x2="332.5" y2="361" stroke="#00c400" stroke-width="1"/>
<polygon points="3.3,77.2 8.1,77.2 5.7,80.2" fill="#fff"/>
<!-- magnifier -->
<g>
<line x1="727.4" y1="535.8" x2="735.6" y2="543.8" stroke="#fff" stroke-width="7.4" stroke-linecap="round"/>
<circle cx="719.8" cy="528.5" r="12.2" fill="#fff"/>
<line x1="727.4" y1="535.8" x2="735.6" y2="543.8" stroke="#444" stroke-width="4.6" stroke-linecap="round"/>
<circle cx="719.8" cy="528.5" r="8.7" fill="#fff" stroke="#444" stroke-width="4.4"/>
<line x1="715.4" y1="528.5" x2="724.2" y2="528.5" stroke="#444" stroke-width="2.7"/>
<line x1="719.8" y1="524.1" x2="719.8" y2="532.9" stroke="#444" stroke-width="2.7"/>
</g>
</svg>
<div class="abs" style="left:0;top:72px;width:1px;height:484px;background:#e8e8e8"></div>
<div id="panel" class="abs"></div>
<div class="t" style="left:19px;top:78.3px;font-size:8.9px;transform:scaleX(0.933);color:#111">View:</div>
<div class="t" style="left:59px;top:78.3px;font-size:8.9px;transform:scaleX(0.933);color:#111">This week</div>
<div class="t" style="left:125.5px;top:78.3px;font-size:8.9px;transform:scaleX(0.933);color:#111">Today</div>
<div class="t" style="left:197px;top:78.3px;font-size:8.6px;transform:scaleX(0.913);color:#111">Timezone:</div>
<svg class="abs" style="left:46px;top:78px" width="90" height="12" viewBox="0 0 90 12">
<circle cx="6.2" cy="6" r="3.9" fill="#dcdcdc" stroke="#6e6e6e" stroke-width="0.9"/><circle cx="6.2" cy="6" r="2.6" fill="#1868b8"/><circle cx="5.7" cy="5.4" r="1.1" fill="#5cb4f0"/>
<circle cx="73" cy="6" r="3.9" fill="#e6e6e6" stroke="#7a7a7a" stroke-width="0.9"/>
</svg>
<div class="abs" style="left:236.3px;top:76.6px;width:125.7px;height:15.4px;background:#fff;border:1px solid #6a6a6a;border-top-color:#444;border-left-color:#444;box-sizing:border-box"></div>
<div class="abs" style="left:349.5px;top:78px;width:10.5px;height:12.6px;background:#f2f2f2;border-left:1px solid #e0e0e0"></div>
<div class="t" style="left:239.8px;top:78.5px;font-size:8.5px;transform:scaleX(0.912);color:#111">GMT time (GMT+0)</div>
<svg class="abs" style="left:350.4px;top:80.6px" width="10" height="8" viewBox="0 0 10 8"><polygon points="2.4,2.6 7.6,2.6 5,5.2" fill="#333"/></svg>
<div class="btn abs" style="left:381px;top:77px;width:59px;height:16.3px;background:#ffa040;font-size:8.4px;line-height:16.3px"><span class="sx" style="transform:scaleX(0.9);position:relative;left:-0.8px">Filter</span></div>
<div class="btn abs" style="left:455px;top:77px;width:59.3px;height:16.3px;background:#ffa040;font-size:8.4px;line-height:16.3px"><span class="sx" style="transform:scaleX(0.917);position:relative;left:-1.5px">Setting</span></div>
<div id="hdr" class="abs"><span style="left:5.9px">Time</span><span style="left:31px">Currency</span><span style="left:73px">News</span><span style="left:247px">Impact</span><span style="left:286.8px">Actual</span><span style="left:332.6px">Forecast</span><span style="left:383px">Previous</span><span style="left:430.6px">Remain</span></div>
<div id="list" class="abs">
<div class="abs" style="left:0;top:132.3px;width:484px;height:17.2px;background:#fcebd8"></div>
<div class="t" style="left:153.9px;top:135.5px;width:200px;text-align:center;font-size:8.6px;transform:scaleX(0.93);transform-origin:50% 50%;color:#222;-webkit-text-stroke:0.2px #222">Friday, 2014.10.10</div>
<div class="row past" style="top:10.4px"><span style="left:3.8px">00:30</span><span style="left:38.8px">AUD</span><span style="left:72.6px">Employment Change</span><i style="left:253.8px"></i><span class="c" style="left:267.8px">-</span><span class="c" style="left:318.1px">-29.6K</span><span class="c" style="left:367.7px">121.0K</span><span class="c" style="left:412.4px">Over</span></div>
<div class="row past" style="top:28.4px"><span style="left:3.8px">00:30</span><span style="left:38.8px">AUD</span><span style="left:72.6px">Unemployment Rate</span><i style="left:253.8px"></i><span class="c" style="left:267.8px">-</span><span class="c" style="left:318.1px">6.2%</span><span class="c" style="left:367.7px">6.1%</span><span class="c" style="left:412.4px">Over</span></div>
<div class="row" style="top:46.1px"><span style="left:3.8px">11:00</span><span style="left:38.8px">GBP</span><span style="left:72.6px">Asset Purchase Facility</span><i style="left:253.8px"></i><span class="c" style="left:267.8px">-</span><span class="c" style="left:318.1px">375B</span><span class="c" style="left:367.7px">375B</span><span class="c" style="left:412.4px">08:54:38</span></div>
<div class="row" style="top:64.0px"><span style="left:3.8px">11:00</span><span style="left:38.8px">GBP</span><span style="left:72.6px">Official Bank Rate</span><i style="left:253.8px"></i><span class="c" style="left:267.8px">-</span><span class="c" style="left:318.1px">0.50%</span><span class="c" style="left:367.7px">0.50%</span><span class="c" style="left:412.4px">08:55:05</span></div>
<div class="row" style="top:81.7px"><span style="left:3.8px">11:03</span><span style="left:38.8px">GBP</span><span style="left:72.6px">MPC Rate Statement</span><i style="left:253.8px"></i><span class="c" style="left:267.8px">-</span><span class="c" style="left:318.1px">-</span><span class="c" style="left:367.7px">-</span><span class="c" style="left:412.4px">08:58:05</span></div>
<div class="row" style="top:99.5px"><span style="left:3.8px">12:30</span><span style="left:38.8px">USD</span><span style="left:72.6px">Unemployment Claims</span><i style="left:253.8px"></i><span class="c" style="left:267.8px">-</span><span class="c" style="left:318.1px">291K</span><span class="c" style="left:367.7px">287K</span><span class="c" style="left:412.4px">10:25:05</span></div>
<div class="row" style="top:117.4px"><span style="left:3.8px">15:00</span><span style="left:38.8px">EUR</span><span style="left:72.6px">ECB President Draghi Speaks</span><i style="left:253.8px"></i><span class="c" style="left:267.8px">-</span><span class="c" style="left:318.1px">-</span><span class="c" style="left:367.7px">-</span><span class="c" style="left:412.4px">12:55:05</span></div>
<div class="row" style="top:152.7px"><span style="left:3.8px">12:30</span><span style="left:38.8px">CAD</span><span style="left:72.6px">Employment Change</span><i style="left:253.8px"></i><span class="c" style="left:267.8px">-</span><span class="c" style="left:318.1px">18.7K</span><span class="c" style="left:367.7px">-11.0K</span><span class="c" style="left:412.4px">1d 10:25:05</span></div>
<div class="row" style="top:170.3px"><span style="left:3.8px">12:30</span><span style="left:38.8px">CAD</span><span style="left:72.6px">Unemployment Rate</span><i style="left:253.8px"></i><span class="c" style="left:267.8px">-</span><span class="c" style="left:318.1px">7.0%</span><span class="c" style="left:367.7px">7.0%</span><span class="c" style="left:412.4px">1d 10:25:04</span></div>
</div>
<div class="abs" style="left:19px;top:123.7px;width:1px;height:178px;background:#555"></div>
<div class="abs" style="left:513.5px;top:123.7px;width:1px;height:9px;background:#555"></div>
<div class="abs" style="left:19px;top:300.9px;width:483px;height:1px;background:#2c2c2c"></div>
<!-- scrollbar -->
<div class="abs" style="left:501.5px;top:132.3px;width:13.5px;height:178.5px;background:#fff;border:1px solid #444;box-sizing:border-box"></div>
<div class="abs" style="left:502.5px;top:133.3px;width:11.5px;height:10.5px;background:#ececec"></div>
<div class="abs" style="left:502.5px;top:230.6px;width:11.5px;height:66.6px;background:#a2a2a2"></div>
<div class="abs" style="left:502.5px;top:297.4px;width:11.5px;height:12.4px;background:#f0f0f0"></div>
<svg class="abs" style="left:502px;top:133px" width="13" height="178" viewBox="0 0 13 178"><polygon points="4,7.2 9,7.2 6.5,4.7" fill="#3c3c3c"/><polygon points="4,169.4 9,169.4 6.5,172" fill="#3c3c3c"/></svg>
<div class="btn abs" style="left:200px;top:310.8px;width:132.8px;height:23.6px;background:#ff5608;font-size:8.1px;line-height:23.6px;border-radius:1.5px"><span class="sx" style="transform:scaleX(0.893);position:relative;top:1.1px;left:-0.6px">UPCOMING NEWS</span></div>
<svg class="abs" style="left:451.8px;top:312.05px" width="22" height="22" viewBox="-11 -11 22 22">
<circle cx="0" cy="0" r="9.35" fill="#2a99d5"/>
<path d="M-1.58,-4.85 A5.1,5.1 0 0 1 4.93,1.32" fill="none" stroke="#fff" stroke-width="2.1"/>
<path d="M1.58,4.85 A5.1,5.1 0 0 1 -4.93,-1.32" fill="none" stroke="#fff" stroke-width="2.1"/>
<polygon points="4.1,4.3 7.6,1.7 2.3,0.4" fill="#fff"/>
<polygon points="-4.1,-4.3 -7.6,-1.7 -2.3,-0.4" fill="#fff"/>
</svg>
<svg class="abs" style="left:508px;top:335px" width="12.5" height="12.5" viewBox="0 0 12.5 12.5"><path d="M1,12 L12,1 M3.8,12 L12,3.8 M6.6,12 L12,6.6 M9.4,12 L12,9.4" stroke="#b4b4b4" stroke-width="0.9"/></svg>
<div class="abs" style="left:0;top:555.4px;width:750px;height:2.6px;background:#a8a8a8"></div>
<div class="abs" style="left:59.5px;top:555.4px;width:58.5px;height:2.6px;background:#fff"></div>
</body></html>
